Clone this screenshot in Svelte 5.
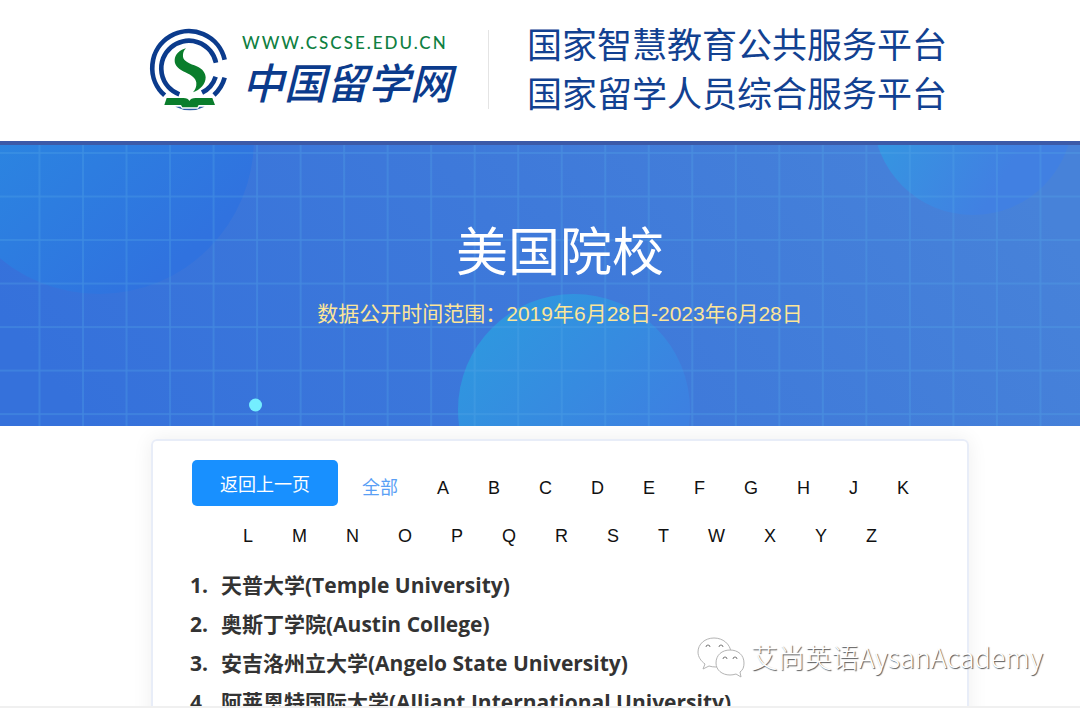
<script lang="ts">
  interface School {
    zh: string;
    en: string;
  }

  const letters: string[] = ["全部", ..."ABCDEFGHJKLMNOPQRSTWXYZ"];

  const schools: School[] = [
    { zh: "天普大学", en: "Temple University" },
    { zh: "奥斯丁学院", en: "Austin College" },
    { zh: "安吉洛州立大学", en: "Angelo State University" },
    { zh: "阿莱恩特国际大学", en: "Alliant International University" },
  ];

  let active = $state("全部");

  const select = (event: MouseEvent, letter: string) => {
    event.preventDefault();
    active = letter;
  };
</script>

<div class="page">
  <header>
    <a class="brand" href="#home" aria-label="中国留学网">
      <svg class="emblem" viewBox="0 0 270 282" aria-hidden="true">
        <g fill="none" stroke="#0b3b8c" stroke-width="14">
          <path d="M56 220 A110 110 0 1 1 236 113" />
          <path d="M100 217 A83 83 0 1 1 210 122" />
          <path d="M236 167 A110 110 0 0 1 204 219" />
          <path d="M209 164 A83 83 0 0 1 168 212" />
        </g>
        <path
          d="M120 79 C100 84 87 98 86 114 C85 132 100 142 118 151 C138 161 149 168 151 182 C152 193 148 203 141 211 C162 204 179 187 179 166 C178 148 164 137 145 130 C125 122 113 116 111 104 C110 94 113 86 120 79 Z"
          fill="#0a7d2c"
        />
        <path
          d="M62 228 H112 C122 228 128 231 130 237 C133 231 139 228 149 228 H199 L207 249 H158 L154 256 H109 L105 249 H55 Z"
          fill="#0a7d2c"
        />
        <path
          d="M88 254 H103 L108 260 H156 L160 254 H176 Q132 276 88 254 Z"
          fill="#2b5ca5"
        />
      </svg>
      <span class="names">
        <span class="domain">WWW.CSCSE.EDU.CN</span>
        <span class="site">中国留学网</span>
      </span>
    </a>
    <div class="platforms">
      <p>国家智慧教育公共服务平台</p>
      <p>国家留学人员综合服务平台</p>
    </div>
  </header>

  <section class="banner">
    <svg
      class="backdrop"
      viewBox="0 0 1080 281"
      preserveAspectRatio="xMidYMid slice"
      aria-hidden="true"
    >
      <defs>
        <linearGradient id="sky" x1="0" x2="1" y1="0.6" y2="0.4">
          <stop offset="0" stop-color="#3571db" />
          <stop offset="0.5" stop-color="#3e79da" />
          <stop offset="1" stop-color="#4782d9" />
        </linearGradient>
        <linearGradient id="bubble-left" x1="0.2" y1="0.3" x2="0.75" y2="0.9">
          <stop offset="0" stop-color="#2a88e1" />
          <stop offset="1" stop-color="#3072df" />
        </linearGradient>
        <linearGradient id="bubble" x1="0.1" y1="0.1" x2="0.75" y2="0.75">
          <stop offset="0" stop-color="#2e98df" />
          <stop offset="1" stop-color="#3d80e1" />
        </linearGradient>
        <linearGradient id="bubble-right" x1="0.1" y1="0.6" x2="0.6" y2="0.9">
          <stop offset="0" stop-color="#3694e1" />
          <stop offset="1" stop-color="#4180e2" />
        </linearGradient>
        <pattern
          id="grid"
          x="38.5"
          y="7"
          width="43.52"
          height="43.52"
          patternUnits="userSpaceOnUse"
        >
          <path
            d="M1 0 V43.52 M0 1 H43.52"
            fill="none"
            stroke="#52a7e8"
            stroke-opacity="0.38"
            stroke-width="1.5"
          />
        </pattern>
      </defs>
      <rect width="1080" height="281" fill="url(#sky)" />
      <circle cx="99" cy="-6" r="155" fill="url(#bubble-left)" />
      <circle cx="973" cy="-30" r="100" fill="url(#bubble-right)" />
      <circle cx="574" cy="265" r="116" fill="url(#bubble)" />
      <rect width="1080" height="281" fill="url(#grid)" />
      <circle cx="255.5" cy="260" r="6.5" fill="#74eeff" />
    </svg>
    <h1>美国院校</h1>
    <p>数据公开时间范围：2019年6月28日-2023年6月28日</p>
  </section>

  <main>
    <div class="card">
      <nav aria-label="首字母">
        <button type="button">返回上一页</button>
        {#each letters as letter (letter)}
          <a
            href="#{letter}"
            class:active={active === letter}
            onclick={(event) => select(event, letter)}>{letter}</a
          >
        {/each}
      </nav>
      <ol>
        {#each schools as school, i (school.en)}
          <li><span class="num">{i + 1}.</span>{school.zh}({school.en})</li>
        {/each}
      </ol>
    </div>
  </main>

  <div class="watermark">
    <svg viewBox="0 0 48 42" aria-hidden="true">
      <g fill="#fff" stroke="#b4b4b4" stroke-width="1">
        <path
          d="M17 2 C8 2 1 8 1 16 C1 21 4 25 8 28 L6 33 L12 30 Q15 31 19 31 C28 30 34 24 34 16 C33 8 26 2 17 2 Z"
        />
        <path
          d="M33 14 C25 14 19 19 19 27 C19 34 25 39 33 39 Q36 39 39 38 L44 41 L43 36 C46 34 47 31 47 27 C47 19 41 14 33 14 Z"
        />
        <path
          d="M9 11 a2 2 0 0 1 4 0 M22 11 a2 2 0 0 1 4 0 M26 23 a2 2 0 0 1 4 0 M36 23 a2 2 0 0 1 4 0"
          fill="none"
          stroke="#777"
        />
      </g>
    </svg>
    <span>艾尚英语AysanAcademy</span>
  </div>
</div>

<style>
  :global(body) {
    margin: 0;
    background: #fff;
    font-family: "Liberation Sans", "Noto Sans CJK SC", sans-serif;
  }

  .page {
    position: relative;
    box-sizing: border-box;
    display: flex;
    flex-direction: column;
    height: 100vh;
    overflow: hidden;
    border-bottom: 2px solid #f0f0f0;
  }

  header {
    display: flex;
    align-items: flex-end;
    padding: 18px 111px 25px 146px;
    border-bottom: 4px solid #3c5aa8;
  }

  .brand {
    display: flex;
    align-items: center;
    gap: 6px;
    text-decoration: none;
  }

  .emblem {
    width: 90px;
    height: 94px;
  }

  .names {
    display: flex;
    flex-direction: column;
  }

  .domain {
    font-family: Lato, sans-serif;
    font-size: 17px;
    font-weight: 500;
    line-height: 24px;
    letter-spacing: 2px;
    color: #0f7f42;
  }

  .site {
    font-family: "Noto Sans CJK SC", sans-serif;
    font-size: 42px;
    font-style: italic;
    font-weight: 500;
    line-height: 52px;
    color: #0b3b8c;
  }

  .platforms {
    margin-left: 36px;
    padding-left: 39px;
    background: linear-gradient(#e4e4e4, #e4e4e4) left 12px / 1px 79px no-repeat;
  }

  .platforms p {
    margin: 0;
    font-family: "Noto Sans CJK SC", sans-serif;
    font-size: 35px;
    line-height: 49px;
    white-space: nowrap;
    color: #124191;
  }

  .banner {
    position: relative;
    box-sizing: border-box;
    flex: none;
    height: 281px;
    padding: 72px 0 0 40px;
    overflow: hidden;
    text-align: center;
  }

  .backdrop {
    position: absolute;
    inset: 0;
    width: 100%;
    height: 100%;
  }

  .banner h1,
  .banner p {
    position: relative;
    margin: 0;
    font-weight: 400;
  }

  .banner h1 {
    font-size: 52px;
    line-height: 72px;
    color: #fff;
  }

  .banner p {
    margin-top: 9px;
    font-size: 21px;
    line-height: 32px;
    color: #fce598;
  }

  main {
    padding: 13px 111px 0 151px;
  }

  .card {
    padding: 19px 37px 37px;
    border: 2px solid #e8edf8;
    border-radius: 6px;
    box-shadow: 0 0 20px rgba(0, 0, 0, 0.07);
  }

  nav {
    display: flex;
    flex-wrap: wrap;
    justify-content: center;
    column-gap: 1px;
  }

  nav button {
    width: 146px;
    height: 46px;
    margin-right: 4px;
    padding: 0;
    border: none;
    border-radius: 5px;
    background: #1890ff;
    color: #fff;
    font-family: inherit;
    font-size: 18px;
    cursor: pointer;
  }

  nav a {
    padding: 8px 19px 0;
    font-size: 18px;
    line-height: 40px;
    color: #111;
    text-decoration: none;
  }

  nav a.active {
    color: #5a9ff5;
  }

  ol {
    margin: 10px 0 0;
    padding: 0;
    list-style: none;
  }

  li {
    display: flex;
    font-family: "Open Sans", "Noto Sans CJK SC", sans-serif;
    font-size: 21px;
    font-weight: 700;
    line-height: 39px;
    white-space: nowrap;
    color: #333;
  }

  .num {
    width: 31px;
  }

  .watermark {
    position: absolute;
    right: 37px;
    bottom: 28px;
    display: flex;
    align-items: center;
    gap: 6px;
    font-family: "Noto Sans CJK SC", sans-serif;
    font-size: 27px;
    font-weight: 300;
    line-height: 40px;
    color: #fff;
    text-shadow: 1px 1px 1px #555;
  }

  .watermark svg {
    width: 48px;
    height: 42px;
  }
</style>
